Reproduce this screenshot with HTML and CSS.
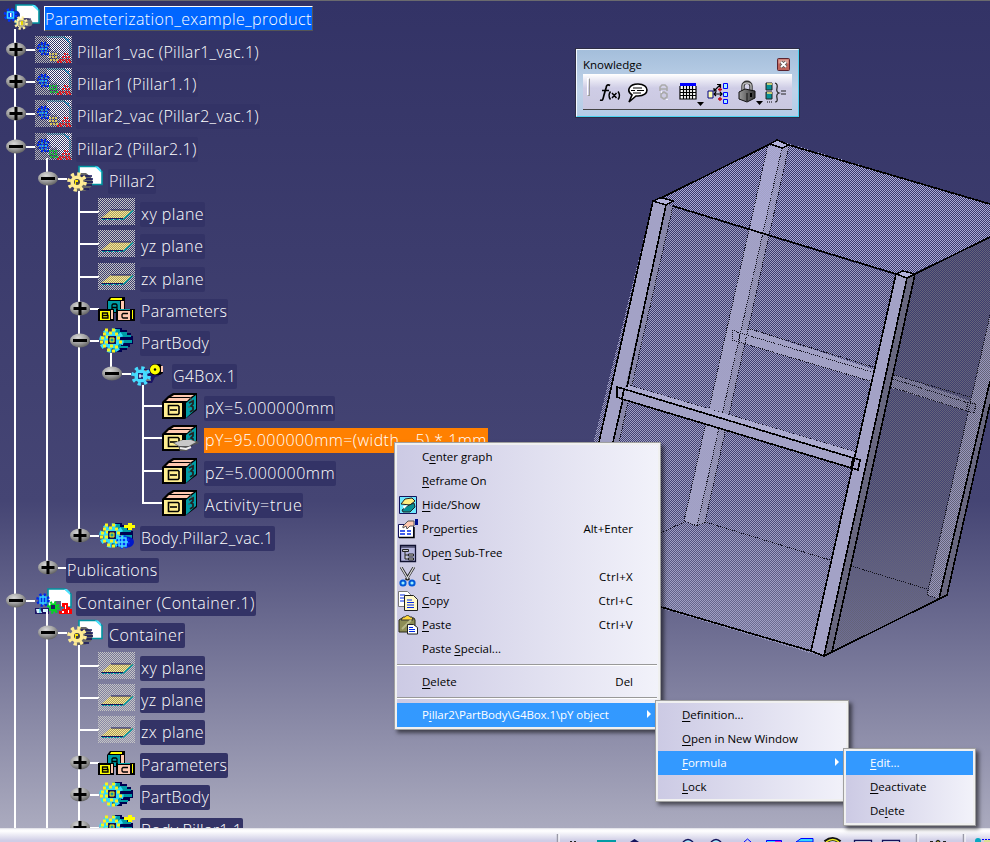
FILE: index.html
```html
<!DOCTYPE html>
<html lang="en">
<head>
<meta charset="utf-8">
<title>Parameterization_example_product</title>
<link rel="stylesheet" href="styles.css">
</head>
<body>
<svg class="defs" width="0" height="0" aria-hidden="true">
  <defs>
    <pattern id="chk" width="2" height="2" patternUnits="userSpaceOnUse" shape-rendering="crispEdges"><rect width="1" height="1" fill="#fff"/><rect x="1" y="1" width="1" height="1" fill="#fff"/></pattern>
    <mask id="half" maskUnits="userSpaceOnUse" x="0" y="0" width="37" height="27"><rect width="37" height="27" fill="url(#chk)"/></mask>
    <radialGradient id="ball" cx=".4" cy=".3" r=".75"><stop offset="0" stop-color="#d8d8d8"/><stop offset=".5" stop-color="#a4a4a4"/><stop offset="1" stop-color="#5c5c5c"/></radialGradient>
    <linearGradient id="lockg"><stop offset="0" stop-color="#999"/><stop offset="1" stop-color="#333"/></linearGradient>
  </defs>
  <symbol id="page" viewBox="0 0 25 20"><path d="M1 1h17l6 5v13H1z" fill="#fff" stroke="#0093a0" stroke-width="1.6"/><path d="M17 1l6 6v-3l-3-3z" fill="#4be3ff"/></symbol>
  <symbol id="gear" viewBox="0 0 20 20"><circle cx="10" cy="10" r="8" fill="none" stroke="currentColor" stroke-width="3.6" stroke-dasharray="3.2 3.083"/><circle cx="10" cy="10" r="6.6" fill="currentColor"/></symbol>
  <symbol id="plus" viewBox="0 0 20 15"><ellipse cx="10" cy="7.5" rx="10" ry="7" fill="url(#ball)"/><path d="M3.500 6h13v3h-13zM8.500 1h3v13h-3z" fill="#000"/></symbol>
  <symbol id="minus" viewBox="0 0 20 15"><ellipse cx="10" cy="7.500" rx="10" ry="7" fill="url(#ball)"/><path d="M3 6h14v3H3z" fill="#000"/></symbol>
  <symbol id="root" viewBox="0 0 37 27">
    <use href="#page" x="12" y="1" width="25" height="20"/>
    <ellipse cx="23" cy="20" rx="6.500" ry="5" fill="#777"/><path d="M20 24h8M19 16h9" stroke="#1b1464"/>
    <ellipse cx="12" cy="12" rx="5" ry="4.500" fill="#0a2a9a"/>
    <use href="#gear" x="0" y="5" width="15" height="14" color="#0033ff"/><path d="M4.500 9h6v6h-6z" fill="none" stroke="#35d6ff" stroke-width="1.500"/><path d="M7 10h1.500v4H7z" fill="#fff"/>
    <use href="#gear" x="11" y="13" width="14" height="14" color="#fff0a0"/><path d="M16 18h5v5h-5z" fill="none" stroke="#777"/><path d="M18 18h2v4h-2z" fill="#e8d800"/>
  </symbol>
  <symbol id="comp" viewBox="0 0 37 27">
    <use href="#page" x="12" y="1" width="25" height="20"/>
    <use href="#gear" x="0" y="6" width="16" height="14" color="#0028e8"/><path d="M5 10h6v6H5zM8 8v10" fill="none" stroke="#35d6ff" stroke-width="1.300"/>
    <path d="M20 14h6v12h-5z" fill="#606080"/>
    <use href="#gear" x="12" y="14" width="13" height="13" color="#00d820"/><path d="M16 18h4v4h-4z" fill="#1c1c5c"/>
    <path d="M0 21h14v6H0z" fill="#1b1464"/><path d="M1 22h4l2 4H2zM8 22h5v3h-5z" fill="#d8f6ff"/><path d="M5 21v5" stroke="#00b8d8"/>
    <path d="M27 16h6v4h2v2h2v5H24v-3h3v-2h2v-2h-2z" fill="#f00"/><path d="M30 18h1v4h-1zM27 24h2v2h-2zM33 23h1v3h-1z" fill="#fff"/>
  </symbol>
  <symbol id="compHid" viewBox="0 0 37 27"><g mask="url(#half)"><path d="M0 0h37v27H0z" fill="#b4b4b4"/><path d="M12 0h24v22H12z" fill="#fff"/><path d="M12 1h17l6 5v15" fill="none" stroke="#009ca5"/><path d="M29 2l5 5V3z" fill="#35d6ff"/></g>
    <g opacity=".55"><use href="#gear" x="1" y="5" width="15" height="15" color="#101a70"/><use href="#gear" x="12" y="14" width="14" height="12" color="#303058"/></g>
    <path d="M3 9h11M2 12h12M4 15h10M6 18h8M6 7h6" stroke="#0028e8" stroke-width="2" stroke-dasharray="2 1"/><path d="M7 9v9M11 9v8M4 13h9" stroke="#35d6ff" stroke-dasharray="2 1"/>
    <path d="M14 18h9M14 21h9M15 24h8" stroke="currentColor" stroke-width="1.500" stroke-dasharray="2 1"/>
    <path d="M29 18h4M27 21h8M24 24h12M22 26h5M31 26h5" stroke="#f00" stroke-width="1.600" stroke-dasharray="2 1"/></symbol>
  <symbol id="part" viewBox="0 0 37 27">
    <use href="#page" x="11" y="0" width="25" height="21"/>
    <path d="M10 8h9l5 4 2 5-2 5-6 4h-8z" fill="#666"/><path d="M14 11h11M18 14h8M18 17h8M18 20h7M14 24h8" stroke="#14145c" stroke-width="1.500"/>
    <use href="#gear" x="0" y="7" width="20" height="20" color="#ffec94"/><circle cx="10" cy="17" r="3" fill="#444"/><path d="M8 15h3v2H9v3H8z" fill="#ffe800"/>
  </symbol>
  <symbol id="plane" viewBox="0 0 37 27"><g mask="url(#half)"><path d="M0 0h37v27H0z" fill="#c4c4c4"/></g><path d="M3 20.500L13 12h22l-9 9z" fill="#a49a66"/><g mask="url(#half)"><path d="M3 20L13 12h22l-9 9z" fill="#ffec90"/></g><path d="M3 20.500h22" fill="none" stroke="#14145c"/><path d="M13 12h20" stroke="#14145c"/><path d="M25 21.500l10-9" stroke="#009ca5" stroke-width="1.500"/><path d="M4 21.500h20" stroke="#009ca5" stroke-dasharray="2 1"/></symbol>
  <symbol id="params" viewBox="0 0 37 27">
    <path d="M12 2h15v16H9V6z" fill="#000"/><path d="M13 3h11v2H12z" fill="#ff0"/><path d="M23 6h3v10h-3z" fill="#ffc8b0"/><path d="M10 6h12v11H10z" fill="#009ca5"/><path d="M14 15V10l1-1h3l1 1v5M14 12.500h5" fill="none" stroke="#000" stroke-width="1.300"/>
    <path d="M0 14h16v12H0z"/><path d="M2 16h10v9H2z" fill="#ff0"/><path d="M13 15h2v9h-2z" fill="#ffc8b0"/><path d="M4.500 18h5v2.500h-5zM4.500 20.500H10V23H4.500z" fill="none" stroke="#000" stroke-width="1.300"/>
    <path d="M18 14h19v12H18z"/><path d="M20 16h12v9H20z" fill="#ffc8b0"/><path d="M34 15h1v9h-1z" fill="#ff0"/><path d="M20 14.500h12" stroke="#009ca5"/><path d="M30 18.500h-5l-1 1V22l1 1h5" fill="none" stroke="#000" stroke-width="1.300"/>
  </symbol>
  <symbol id="body" viewBox="0 0 37 27">
    <path d="M14 1h10v2h5v3h4v3h2v8h-3v3h-3v3h-5v2H14z" fill="#000050"/><path d="M16 2h6v3h7v3h4v2H22v3h12v3H23v3h7v2H18v4h-3z" fill="#009ca5"/>
    <use href="#gear" x="1" y="1" width="25" height="25" color="#30dcf8"/>
    <path d="M7 3h3M14 3h3M5 7h3M11 6h3M17 7h3M3 11h3M8 10h3M19 11h3M2 15h3M7 15h3M21 15h3M5 19h3M12 19h3M17 20h3M9 23h3M14 24h3" stroke="#f6f21c" stroke-width="3"/>
    <path d="M10 9h8v8h-8z" fill="#12125a"/><path d="M12 11h4v4h-4z" fill="#0a9aa8" stroke="#ffe800"/>
  </symbol>
  <symbol id="bodyAdd" viewBox="0 0 37 27"><use href="#body"/><path d="M30 1h4v2h4v3h-4v2h-4V6h-4V3h4z" fill="#ff0"/><ellipse cx="29" cy="20" rx="7" ry="5.500" fill="#0018c8"/><use href="#gear" x="17" y="13" width="16" height="14" color="#0030ff"/><path d="M21 16h7v8h-7zM24 14v12M19 20h11" fill="none" stroke="#46dcff" stroke-width="1.500"/></symbol>
  <symbol id="box" viewBox="0 0 37 27">
    <path d="M11 9h14v3l4 1v3l-4 1-3 6H10z" fill="#1b1464"/><path d="M14 11h4M16 20h5" stroke="#777" stroke-width="2"/>
    <use href="#gear" x="1" y="6" width="20" height="20" color="#46dcff"/><path d="M8 13h5v6H8z" fill="#203078"/><path d="M10 14v4M9 16h4" stroke="#fff"/>
    <path d="M23 4h7l3 3v6l-3 2h-7l-3-3V7z"/><circle cx="25" cy="9.500" r="5" fill="#ff0"/><circle cx="25" cy="9.500" r="1.200"/><path d="M31 6h2v6h-2z" fill="#ffc8b0"/>
  </symbol>
  <symbol id="val" viewBox="0 0 37 27">
    <path d="M0 10l6-6 5-3h24v17l-12 9H0z"/><path d="M12 3h20l-3 2H9zM7 6h21l-3 3H4z" fill="#ffc8b0"/>
    <path d="M24 11l10-8v14l-10 9z" fill="#009ca5"/><path d="M27 11l4-2v3l-2 2 2 1v3l-3 2" fill="none" stroke="#222" stroke-width="1.800"/><path d="M28 5l2 4M26 15h2" stroke="#555"/>
    <path d="M2 11h18v14H2z" fill="#ffee90"/><path d="M6.500 13.500H16l1 1v7l-1 1H6.500z" fill="none" stroke="#000" stroke-width="1.600"/><path d="M8 18h7" stroke="#000" stroke-width="1.600"/>
  </symbol>
  <symbol id="valF" viewBox="0 0 37 27"><use href="#val"/><path d="M11 19l9-3h9l6 1 2 2-8 3-4 5h-7l-2-5z" fill="#555"/><path d="M12 19l9-3h8l5 2-7 4H17z" fill="#c8c8c8"/><path d="M18 24l6 1 5-2" stroke="#eee" fill="none" stroke-width="2"/></symbol>
</svg>

<main class="viewport">
  <svg class="model" width="990" height="828" viewBox="0 0 990 828" shape-rendering="crispEdges">
    <defs>
      <pattern id="dTop" width="2" height="2" patternUnits="userSpaceOnUse"><rect width="1" height="1" fill="#aaa9d6"/><rect x="1" y="1" width="1" height="1" fill="#aaa9d6"/></pattern>
      <pattern id="dFront" width="2" height="2" patternUnits="userSpaceOnUse"><rect width="1" height="1" fill="#a09fc4"/><rect x="1" y="1" width="1" height="1" fill="#a09fc4"/></pattern>
      <pattern id="dSide" width="2" height="2" patternUnits="userSpaceOnUse"><rect width="1" height="1" fill="#646379"/><rect x="1" y="1" width="1" height="1" fill="#646379"/></pattern>
    </defs>
    <g fill="#a3a2c6">
      <path d="M768 145L782 148L697 526L684 521z"/><path d="M782 148L789 145L705 522L697 526z" fill="#8483a2"/>
      <path d="M990 315L927.600 595L939 599L990 381z" fill="#9897bb"/><path d="M990 381L939 599L947 595L990 404z" fill="#68677f"/>
      <path d="M750 329L976 403L974 413L738.600 341.600V331z"/>
      <path d="M891 373L976 403L974 413L889 386z" fill="#8988ad"/>
    </g>
    <path d="M653 201L777 140L990 204V237L905 277z" fill="url(#dTop)"/>
    <path d="M653 201L905 278L820 656L560 578z" fill="url(#dFront)"/>
    <path d="M907 278L990 237V381L939 599L822 655z" fill="url(#dSide)"/>
    <g fill="none" stroke="#10101c" stroke-dasharray="1 1">
      <path d="M768 145L684 521L697 526L782 148M697 526L705 522L789 146"/>
      <path d="M750 329L873 367M740 333L872 372M739 342L870 381M732 330L740 333L739 342L732 340z"/>
      <path d="M894 375L970 397M893 379L968 403M891 387L967 411M968 402L976 404L974 413L966 411z"/>
      <path d="M990 315L927 595L939 599M661 533L684 522M705 522L830 560M851 566L927 589"/>
    </g>
    <path d="M653 201L666 205L613 442H599z" fill="#a3a2c6"/>
    <path d="M666 205L673 206L619 442H613z" fill="#8786a8"/>
    <path d="M673 206L619 442M628 385L855 452" fill="none" stroke="#10101c" stroke-dasharray="1 1"/>
    <path d="M628 385L855 452L854 458L624 389z" fill="#adacd0"/>
    <path d="M896 274L907 278L824 656L811 651z" fill="#a3a2c6"/>
    <path d="M907 278L915 274L832 653L824 656z" fill="#68677f"/>
    <path d="M617 387L860 460L858 470L617 397z" fill="#a3a2c6"/>
    <g fill="#b4b3dc" stroke="#000" stroke-width="1.500">
      <path d="M653 201L661 197.500L673 201L666 205z"/><path d="M770 144L777 140L789 145L782 148z"/><path d="M896 274L903 271L915 274L907 278z"/>
    </g>
    <g fill="none" stroke="#000" stroke-width="1.600">
      <path d="M661 198L770 144M789 145L990 204M673 206L896 274M915 274L990 237"/>
      <path d="M653 201L599 442M666 205L627 387M623 399L613 442"/>
      <path d="M896 274L811 651L824 656L907 278M824 656L832 652L915 274"/>
      <path d="M617 387L624 389L622 399L617 397zM624 389L860 460L858 470L622 399M853 458L851 468"/>
      <path d="M661 607L811 651M832 652L939 599L947 595L990 404M990 381L939 599"/>
    </g>
  </svg>

  <section class="tree">
    <div class="row root tall"><svg class="ico"><use href="#root"/></svg><span class="label selected">Parameterization_example_product</span></div>
    <ul class="open">
      <li><div class="row"><svg class="knob"><use href="#plus"/></svg><i class="tick"></i><svg class="ico y"><use href="#compHid"/></svg><span class="label">Pillar1_vac (Pillar1_vac.1)</span></div></li>
      <li><div class="row"><svg class="knob"><use href="#plus"/></svg><i class="tick"></i><svg class="ico g"><use href="#compHid"/></svg><span class="label">Pillar1 (Pillar1.1)</span></div></li>
      <li><div class="row tall"><svg class="knob"><use href="#plus"/></svg><i class="tick"></i><svg class="ico y"><use href="#compHid"/></svg><span class="label">Pillar2_vac (Pillar2_vac.1)</span></div></li>
      <li><div class="row"><svg class="knob"><use href="#minus"/></svg><i class="tick"></i><svg class="ico g"><use href="#compHid"/></svg><span class="label">Pillar2 (Pillar2.1)</span></div>
        <ul>
          <li><div class="row tall"><svg class="knob"><use href="#minus"/></svg><i class="tick"></i><svg class="ico"><use href="#part"/></svg><span class="label">Pillar2</span></div>
            <ul class="inner">
              <li><div class="row"><i class="tick leaf"></i><svg class="ico"><use href="#plane"/></svg><span class="label wide">xy plane</span></div></li>
              <li><div class="row tall"><i class="tick leaf"></i><svg class="ico"><use href="#plane"/></svg><span class="label wide">yz plane</span></div></li>
              <li><div class="row"><i class="tick leaf"></i><svg class="ico"><use href="#plane"/></svg><span class="label wide">zx plane</span></div></li>
              <li><div class="row"><svg class="knob"><use href="#plus"/></svg><i class="tick"></i><svg class="ico"><use href="#params"/></svg><span class="label">Parameters</span></div></li>
              <li><div class="row tall"><svg class="knob"><use href="#minus"/></svg><i class="tick"></i><svg class="ico"><use href="#body"/></svg><span class="label">PartBody</span></div>
                <ul>
                  <li><div class="row"><svg class="knob"><use href="#minus"/></svg><i class="tick"></i><svg class="ico"><use href="#box"/></svg><span class="label">G4Box.1</span></div>
                    <ul>
                      <li><div class="row"><i class="tick leaf"></i><svg class="ico"><use href="#val"/></svg><span class="label wide">pX=5.000000mm</span></div></li>
                      <li><div class="row tall"><i class="tick leaf"></i><svg class="ico"><use href="#valF"/></svg><span class="label hot">pY=95.000000mm=(width _ 5) * 1mm</span></div></li>
                      <li><div class="row"><i class="tick leaf"></i><svg class="ico"><use href="#val"/></svg><span class="label wide">pZ=5.000000mm</span></div></li>
                      <li><div class="row tall"><i class="tick leaf"></i><svg class="ico"><use href="#val"/></svg><span class="label wider">Activity=true</span></div></li>
                    </ul>
                  </li>
                </ul>
              </li>
              <li><div class="row"><svg class="knob"><use href="#plus"/></svg><i class="tick"></i><svg class="ico"><use href="#bodyAdd"/></svg><span class="label">Body.Pillar2_vac.1</span></div></li>
            </ul>
          </li>
          <li><div class="row tall"><svg class="knob"><use href="#plus"/></svg><i class="tick"></i><span class="label bare">Publications</span></div></li>
        </ul>
      </li>
      <li><div class="row"><svg class="knob"><use href="#minus"/></svg><i class="tick"></i><svg class="ico"><use href="#comp"/></svg><span class="label wide">Container (Container.1)</span></div>
        <ul class="open">
          <li><div class="row tall"><svg class="knob"><use href="#minus"/></svg><i class="tick"></i><svg class="ico"><use href="#part"/></svg><span class="label wide">Container</span></div>
            <ul class="open inner">
              <li><div class="row"><i class="tick leaf"></i><svg class="ico"><use href="#plane"/></svg><span class="label wide">xy plane</span></div></li>
              <li><div class="row"><i class="tick leaf"></i><svg class="ico"><use href="#plane"/></svg><span class="label wide">yz plane</span></div></li>
              <li><div class="row tall"><i class="tick leaf"></i><svg class="ico"><use href="#plane"/></svg><span class="label wide">zx plane</span></div></li>
              <li><div class="row"><svg class="knob"><use href="#plus"/></svg><i class="tick"></i><svg class="ico"><use href="#params"/></svg><span class="label">Parameters</span></div></li>
              <li><div class="row tall"><svg class="knob"><use href="#plus"/></svg><i class="tick"></i><svg class="ico"><use href="#body"/></svg><span class="label">PartBody</span></div></li>
              <li><div class="row"><svg class="knob"><use href="#plus"/></svg><i class="tick"></i><svg class="ico"><use href="#bodyAdd"/></svg><span class="label">Body.Pillar1.1</span></div></li>
            </ul>
          </li>
        </ul>
      </li>
    </ul>
  </section>
</main>

<section class="palette">
  <header><span>Knowledge</span><svg width="13" height="13" viewBox="0 0 13 13"><rect x=".5" y=".5" width="12" height="12" rx="1" fill="#c0655c" stroke="#5a2430"/><path d="M1.500 1.500h10v4h-10z" fill="#dca098"/><path d="M4 4l5 5M9 4l-5 5" stroke="#555" stroke-width="3.400"/><path d="M4 4l5 5M9 4l-5 5" stroke="#fff" stroke-width="1.800"/></svg></header>
  <div class="tools">
    <i class="grip"></i>
    <svg class="fx" width="24" height="22" viewBox="0 0 24 22" fill="none" stroke="#000"><path d="M1 18c3 1 3-1 4-5l2-7c.5-3 2-4 4-2.500M3 8.500h7" stroke-width="1.700"/><path d="M11.500 9.500q-3 4 0 8M19 9.500q3 4 0 8M13 11l4.500 5M17.500 11L13 16" stroke-width="1.500"/></svg>
    <svg width="22" height="22" viewBox="0 0 22 22"><path d="M11 2c6 0 9 3 9 6s-3 6-9 6H9l-7 6 3-7C-1 9 2 2 11 2z" fill="#fff" stroke="#000" stroke-width="1.600"/><path d="M6 6h9M4 8.500h4M10 8.500h7M6 11h8" stroke="#000"/></svg>
    <svg width="12" height="20" viewBox="0 0 12 20" fill="none" stroke="#aaa" stroke-width="1.600"><path d="M2 9V5l2-2h3l2 2v4M2 7h7M3 12l3-2 3 2v3l-3 2-3-2z"/><path d="M3 10h1M9 17v1" stroke="#fff"/></svg>
    <svg width="26" height="24" viewBox="0 0 26 24"><path d="M1 1h16v3H1z" fill="#00f"/><path d="M1 4h16v13H1z" fill="#fff"/><path d="M1 4v13h16V4M1 7.500h16M1 10.500h16M1 13.500h16M4.500 4v13M7.500 4v13M10.500 4v13M13.500 4v13" fill="none" stroke="#000" stroke-width="1.200"/><path d="M18 20h7l-3.500 4z"/></svg>
    <svg width="22" height="22" viewBox="0 0 22 22"><path d="M7 9l6-6M10 2.500h3.500V6M7 6v3h3M7 12h8M13 10l2 2-2 2M9 10l-2 2 2 2" stroke="#000" fill="none" stroke-width="1.200"/><path d="M1 9h5v7H1z" fill="#ffffb0" stroke="#000080"/><path d="M16.500 1.500h4v5h-4zM16.500 10.500h4v4h-4zM16.500 17.500h4v4h-4z" fill="#aef" stroke="#00f"/><path d="M11 7.500h4M13 5.500v4M11 17h4M13 15v4" stroke="#c00010" stroke-width="1.300"/></svg>
    <svg width="28" height="25" viewBox="0 0 28 25"><path d="M6 11V6c0-5 8-5 8 0v5" fill="none" stroke="#333" stroke-width="3.400"/><path d="M6 10V6c0-4 8-4 8 0v4" fill="none" stroke="#bbb" stroke-width="1.400"/><path d="M2 12l6-3 10 2v7l-8 4-8-3z" fill="url(#lockg)" stroke="#111"/><path d="M10 13v8" stroke="#111"/><path d="M13 13h2v4h-2z"/><path d="M19 21h7l-3.500 4z"/></svg>
    <svg width="22" height="22" viewBox="0 0 22 22"><path d="M1 1h6v7H1zM1 10h6v7H1z" fill="#078e94" stroke="#222"/><path d="M2 2h5M2 11h5" stroke="#ffe878" stroke-width="1.500"/><path d="M2 20h6" stroke="#000" stroke-dasharray="1 1"/><path d="M10 1q3 1 2 5t2 5q-3 1-2 5t-2 4M16 9h5M16 12h5" fill="none" stroke="#222" stroke-width="1.200"/></svg>
  </div>
</section>

<nav class="menu main-menu">
  <div class="item"><span>C<u>e</u>nter graph</span></div>
  <div class="item"><span><u>R</u>eframe On</span></div>
  <div class="item"><svg width="20" height="20" viewBox="0 0 20 20"><path d="M1.500 1.500h17v17h-17z" fill="#6fe9ff" stroke="#14145c"/><path d="M3 9l4-5 7-1 3 3-5 4z" fill="#ffee80" stroke="#222"/><path d="M4 15l5-4 7-3 1 4-5 5H5z" fill="#078e94" stroke="#222"/><path d="M5 11l5-1-4 4z" fill="#fff"/></svg><span><u>H</u>ide/Show</span></div>
  <div class="item"><svg width="20" height="20" viewBox="0 0 20 20"><path d="M.5 5.500h15v13H.5z" fill="#fff" stroke="#14145c"/><path d="M1 18.500h15V8" fill="none" stroke="#000" stroke-width="1.500"/><path d="M2 12h5M9 12h4M2 15h5M9 15h4" stroke="#0028e8" stroke-width="1.500"/><path d="M5 7l5-5h6v5h-4l-3 3-1-3-3 2z" fill="#ffc8b0" stroke="#555"/><path d="M17 0h3v6h-3z" fill="#001090"/></svg><span>Pr<u>o</u>perties</span><kbd>Alt+Enter</kbd></div>
  <div class="item"><svg width="20" height="20" viewBox="0 0 20 20"><path d="M2.500 2.500h15v16h-15z" fill="#b4b4dc" stroke="#101030" stroke-width="1.300"/><path d="M2 4h16" stroke="#101030"/><path d="M4.500 6.500h6v2h-6zM10.500 11h5v2h-5zM10.500 15h5v2h-5zM7 9v7h3M7 12h3" fill="#ccc" stroke="#222"/></svg><span>Ope<u>n</u> Sub-Tree</span></div>
  <div class="item"><svg width="20" height="20" viewBox="0 0 20 20"><path d="M3 0l8 13M16 0L8 13" stroke="#222" stroke-width="2.600"/><path d="M3 0l7 12M16 0L9 12" stroke="#ddd" stroke-width="1.200"/><circle cx="5" cy="16" r="2.600" fill="#9ef" stroke="#0058d8" stroke-width="2"/><circle cx="14" cy="16" r="2.600" fill="#9ef" stroke="#0058d8" stroke-width="2"/></svg><span>Cu<u>t</u></span><kbd class="sp">Ctrl+X</kbd></div>
  <div class="item"><svg width="20" height="20" viewBox="0 0 20 20"><path d="M.5.500h9l3 3v12H.5z" fill="#fff" stroke="#777"/><path d="M2 4h5M2 7h5M2 10h5" stroke="#0028e8"/><path d="M6.500 4.500h9l4 4v11h-13z" fill="#fff8c8" stroke="#222"/><path d="M9 9h5M9 11.500h7M9 14h7M9 16.500h7" stroke="#0028e8"/></svg><span><u>C</u>opy</span><kbd class="sp">Ctrl+C</kbd></div>
  <div class="item"><svg width="20" height="20" viewBox="0 0 20 20"><path d="M1 5l3-2h12l1 2v10l-3 2H1z" fill="#8c8c55" stroke="#2a2a18"/><path d="M3 5l2-3h2c1-2 4-2 5 0h2l1 3z" fill="#ffd83a" stroke="#333"/><path d="M4 14l9-9" stroke="#b8b888" stroke-width="2"/><path d="M9.500 9.500h6l4 3v6.500h-10z" fill="#fff" stroke="#222"/><path d="M11 12.500h4M11 14.500h6M11 16.500h6" stroke="#0028e8"/></svg><span><u>P</u>aste</span><kbd class="sp">Ctrl+V</kbd></div>
  <div class="item"><span>Paste <u>S</u>pecial...</span></div>
  <hr>
  <div class="item"><span><u>D</u>elete</span><kbd>Del</kbd></div>
  <hr>
  <div class="item active parent path"><span>P<u>i</u>llar2\PartBody\G4Box.1\pY object</span></div>
</nav>

<nav class="menu sub-menu">
  <div class="item"><span><u>D</u>efinition...</span></div>
  <div class="item"><span><u>O</u>pen in New Window</span></div>
  <div class="item active parent"><span><u>F</u>ormula</span></div>
  <div class="item"><span><u>L</u>ock</span></div>
</nav>

<nav class="menu formula-menu">
  <div class="item active"><span><u>E</u>dit...</span></div>
  <div class="item"><span><u>D</u>eactivate</span></div>
  <div class="item"><span>De<u>l</u>ete</span></div>
</nav>

<footer class="dock">
  <svg width="990" height="14" viewBox="0 0 990 14">
    <path d="M557.500 6v8M916.500 6v8M963.500 6v8" stroke="#9a9aa8" stroke-width="1.500"/><path d="M559 6v8M918 6v8M965 6v8" stroke="#fff"/>
    <path d="M570 13.500h2M574 13.500h2" stroke="#222"/><path d="M597 12h19v2h-19z" fill="#009ca5"/><path d="M630 14l4.500-3 4.500 3z" fill="#14145c"/>
    <path d="M683 14q5-5 10 0M711 14q5-5 10 0" fill="#aef" stroke="#14145c" stroke-width="1.500"/><path d="M744 14l3.500-3 3.500 3" fill="none" stroke="#00f"/>
    <path d="M766.500 12.500h15V15h-15z" fill="#35d6ff" stroke="#00f"/><path d="M775 13.500h6" stroke="#d020d0"/><path d="M796 14l5-3.500h12V14z" fill="#35d6ff" stroke="#00f"/>
    <path d="M825 14q8-6 15 0" fill="none" stroke="#111" stroke-width="4"/><path d="M826 14q7-5 13 0" fill="none" stroke="#ee2" stroke-width="1.500"/>
    <path d="M854.500 14v-1.500h17V14M882.500 14v-1.500h17V14" fill="#fff" stroke="#14145c" stroke-width="1.300"/><path d="M930 13.500h3M943 13.500h3" stroke="#222"/><path d="M936 14q2-3 4 0" fill="#ee2" stroke="#222" stroke-width="1.300"/><circle cx="978" cy="13" r="3" fill="#08a8c0"/><path d="M982 11.500h8" stroke="#00f" stroke-dasharray="2 1"/><path d="M984 13h6" stroke="#ee4"/>
  </svg>
</footer>
</body>
</html>
```
FILE: styles.css
```css
* { box-sizing: border-box; }
body { margin: 0; width: 990px; height: 842px; overflow: hidden; position: relative; display: flex; flex-direction: column; font-family: "Open Sans", "Noto Sans", sans-serif; }
.defs { position: absolute; }
svg { display: block; flex: none; }

.viewport { position: relative; height: 828px; overflow: hidden; border-top: 1px solid #6a6a6e; background: linear-gradient(#333366 0, #454574 500px, #ababbf 828px); }
.model { position: absolute; left: 0; top: -1px; }

.tree { position: relative; padding-top: 2px; color: #fff; font-size: 16px; font-weight: 300; letter-spacing: .3px; white-space: nowrap; }
.tree ul { list-style: none; margin: 0; padding: 0; }
.tree ul ul { margin-left: 32px; }
.tree li { position: relative; }
.tree li::before { content: ""; position: absolute; left: 14px; top: -7px; height: calc(100% + 7px); width: 2px; background: #fff; }
.tree ul:not(.open) > li:last-child::before { height: 22px; }
.row { position: relative; display: flex; align-items: flex-start; height: 32px; padding-left: 6px; }
.row.tall { height: 33px; }
.row.root { padding-left: 3px; }
.ico { width: 37px; height: 27px; overflow: visible; }
.inner .ico { margin: 0 1px 0 -1px; }
.ico.y { color: #ffe84a; }
.ico.g { color: #00d820; }
.knob { width: 20px; height: 15px; margin-top: 6px; }
.tick { width: 9px; height: 2px; margin-top: 13px; background: #fff; }
.tick.leaf { width: 19px; margin-left: 10px; }
.label { height: 25px; margin: 4px 0 0 4px; padding: 0 1px; line-height: 25px; background: #333366; border-radius: 2px; }
.label.wide { letter-spacing: .47px; }
.label.wider { letter-spacing: .66px; }
.label.bare { margin-left: -1px; }
.label.selected { margin-top: 3px; background: #0066ff; border: 1px solid #fff; border-right-color: #555; border-bottom-color: #555; line-height: 24px; padding: 0; border-radius: 0; letter-spacing: .38px; }
.label.hot { background: #ff8000; border-radius: 0; letter-spacing: .43px; }

.palette { position: absolute; left: 576px; top: 49px; width: 223px; height: 68px; padding: 0 6px; background: linear-gradient(#a4bedb, #bfd3e9 60%, #b4cce6); border: 1px solid #f4f8ff; border-right-color: #4ad2f2; border-bottom-color: #4ad2f2; outline: 1px solid #2d2d44; outline-offset: 0; }
.palette header { display: flex; justify-content: space-between; align-items: center; height: 24px; padding: 4px 2px 0 0; font-size: 11.500px; color: #000; }
.palette header svg { margin-top: 1px; }
.tools { display: flex; align-items: flex-start; height: 36px; padding-top: 6px; background: linear-gradient(#fff, #cfcde6 40%, #cac8e0); border-bottom: 1px solid #444; }
.tools svg { margin-top: 2px; }
.grip { width: 3px; height: 18px; margin: -2px 9px 0 4px; border: 1px solid #fff; border-right-color: #999; border-bottom-color: #999; }
.tools svg:nth-of-type(2) { margin-left: 4px; }
.tools svg:nth-of-type(3) { margin-left: 9px; }
.tools svg:nth-of-type(4) { margin-left: 9px; }
.tools svg:nth-of-type(5) { margin-left: 2px; }
.tools svg:nth-of-type(6) { margin-left: 8px; margin-top: 0; }

.menu { position: absolute; border: 1px solid #a0a0a0; padding: 2px; background: linear-gradient(90deg, #cccae4, #f2f2fa) content-box, #f0f0f0; box-shadow: 3px 3px 4px rgba(0, 0, 0, .55); color: #000; font-size: 11.500px; white-space: nowrap; }
.main-menu { left: 394px; top: 442px; width: 267px; }
.sub-menu { left: 655px; top: 700px; width: 194px; }
.formula-menu { left: 843px; top: 748px; width: 133px; }
.item { position: relative; display: flex; align-items: center; height: 24px; padding: 0 25px 2px; }
.sub-menu .item, .formula-menu .item { padding-left: 24px; }
.item svg { width: 20px; margin: 1px 4px 0 -24px; }
.item u { text-underline-offset: 2px; text-decoration-thickness: 1px; }
.item kbd { margin-left: auto; font: inherit; }
.item kbd.sp { letter-spacing: .3px; }
.item.path { letter-spacing: -.08px; }
.item.active { background: #3399ff; color: #fff; }
.item.parent::after { content: ""; position: absolute; right: 7px; top: 7px; border: 4px solid transparent; border-left-color: #fff; border-right: 0; }
.menu hr { height: 2px; margin: 3px 1px 4px 0; border: 0; border-top: 1px solid #999; background: #fff; }

.dock { height: 14px; background: linear-gradient(#f4f4f8, #fff 15%, #cfcde6 90%); border-top: 1px solid #e4e4ea; }
.dock svg { margin-top: -1px; }
```
